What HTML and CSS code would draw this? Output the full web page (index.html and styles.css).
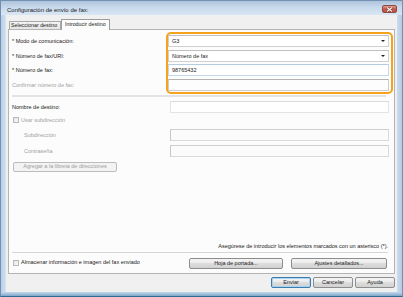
FILE: index.html
```html
<!DOCTYPE html>
<html lang="es">
<head>
<meta charset="utf-8">
<title>Configuración de envío de fax</title>
<link rel="stylesheet" href="styles.css">
</head>
<body>
<div class="window">
  <div class="titlebar">
    <span class="title">Configuración de envío de fax:</span>
    <span class="close"><svg width="7" height="5" viewBox="0 0 7 5"><path d="M1 0.5 L6 4.5 M6 0.5 L1 4.5" stroke="#5a2a24" stroke-width="2.2"/><path d="M1 0.5 L6 4.5 M6 0.5 L1 4.5" stroke="#ffffff" stroke-width="1.2"/></svg></span>
  </div>
  <div class="body">
    <div class="frame-l"></div>
    <div class="client">
      <div class="tabs">
        <div class="tab">Seleccionar destino</div>
        <div class="tab active">Introducir destino</div>
      </div>
      <div class="panel">
        <div class="top">
          <div class="labels">
            <div class="lbl">* Modo de comunicación:</div>
            <div class="lbl">* Número de fax/URI:</div>
            <div class="lbl">* Número de fax:</div>
            <div class="lbl dis">Confirmar número de fax:</div>
          </div>
          <div class="highlight">
            <div class="field combo"><span>G3</span><i class="arrow"></i></div>
            <div class="field combo"><span>Número de fax</span><i class="arrow"></i></div>
            <div class="field focus"><span>98765432</span></div>
            <div class="field confirm"></div>
          </div>
        </div>
        <div class="sep"></div>
        <div class="row first">
          <span class="lbl">Nombre de destino:</span>
          <div class="field light"></div>
        </div>
        <div class="check-row">
          <span class="check"></span><span class="lbl dis">Usar subdirección</span>
        </div>
        <div class="row sub">
          <span class="lbl dis">Subdirección</span>
          <div class="field disabled"></div>
        </div>
        <div class="row sub second">
          <span class="lbl dis">Contraseña</span>
          <div class="field disabled"></div>
        </div>
        <div class="btn dis-btn add">Agregar a la libreta de direcciones</div>
        <div class="bottom">
          <p class="note">Asegúrese de introducir los elementos marcados con un asterisco (*).</p>
          <div class="sep thin"></div>
          <div class="opt-row">
            <span class="check"></span><span class="lbl grow">Almacenar información e imagen del fax enviado</span>
            <div class="btn cover">Hoja de portada...</div>
            <div class="btn details">Ajustes detallados...</div>
          </div>
        </div>
      </div>
      <div class="actions">
        <div class="btn act default">Enviar</div>
        <div class="btn act">Cancelar</div>
        <div class="btn act">Ayuda</div>
      </div>
    </div>
    <div class="frame-r"></div>
  </div>
  <div class="frame-b"></div>
</div>
</body>
</html>
```
FILE: styles.css
```css
* { box-sizing: border-box; }
html, body { margin: 0; padding: 0; }
body {
  width: 403px;
  height: 297px;
  overflow: hidden;
  font-family: "Liberation Sans", Arial, sans-serif;
  font-size: 5.5px;
  color: #1a1a1a;
  background: #ffffff;
}
.window {
  width: 403px;
  height: 297px;
  display: flex;
  flex-direction: column;
  border: 1px solid #7390b3;
  border-bottom-color: #2f6a93;
  background: #c5d8ec;
}
.titlebar {
  height: 14px;
  display: flex;
  align-items: flex-start;
  background: linear-gradient(#aec4dc, #c8d9ec 45%, #d9e6f4);
}
.title {
  margin: 5px 0 0 6px;
  font-size: 6px;
  line-height: 8px;
  color: #1d1d1d;
  flex: 1;
}
.close {
  width: 15px;
  height: 8px;
  margin: 4px 5px 0 0;
  border: 1px solid #8c4b42;
  border-radius: 2px;
  background: linear-gradient(#e29a8e, #c95a4b 50%, #c0513f);
  display: flex;
  align-items: center;
  justify-content: center;
}
.close svg { display: block; }
.body {
  flex: 1;
  display: flex;
}
.frame-l { width: 4px; background: linear-gradient(90deg, #bcd0e6, #cbdcee); }
.frame-r { width: 5px; background: linear-gradient(90deg, #cbdcee, #b6cbe2); }
.frame-b { height: 4px; background: linear-gradient(#c7d9ec, #7ea6c8); }
.client {
  width: 392px;
  background: #f0f0f0;
  border-left: 1px solid #d7e2ee;
  padding: 4px 2px 4px 2px;
  display: flex;
  flex-direction: column;
}
.tabs {
  height: 10px;
  display: flex;
  align-items: flex-end;
  padding-left: 1px;
}
.tab {
  position: relative;
  height: 8px;
  width: 52px;
  border: 1px solid #a8a8a8;
  border-bottom: none;
  border-radius: 1px 1px 0 0;
  background: linear-gradient(#f5f5f5, #e4e4e4);
  font-size: 5.3px;
  line-height: 7px;
  padding-left: 1px;
  white-space: nowrap;
}
.tab.active {
  width: 49px;
  height: 11px;
  margin-bottom: -1px;
  background: #fcfcfc;
  border-color: #9c9c9c;
  padding-left: 3px;
  line-height: 9px;
  z-index: 1;
}
.panel {
  height: 245px;
  width: 387px;
  border: 1px solid #b4b4b4;
  background: #fcfcfc;
  padding: 0 1px 4px 3px;
  display: flex;
  flex-direction: column;
}
.top {
  display: flex;
  margin-top: 2px;
}
.labels {
  flex: 1;
  padding-top: 3px;
  display: flex;
  flex-direction: column;
  gap: 2.67px;
}
.lbl {
  line-height: 12px;
  height: 12px;
  white-space: nowrap;
}
.dis { color: #a2a2a2; }
.highlight {
  width: 227px;
  border: 2px solid #f6a31c;
  border-radius: 5px;
  padding: 1px 2px 1px 0;
  display: flex;
  flex-direction: column;
  gap: 2.67px;
}
.field {
  height: 12px;
  border: 1px solid #c9c9c9;
  border-top-color: #b5b5b5;
  background: #ffffff;
  display: flex;
  align-items: center;
  padding-left: 3px;
  line-height: 10px;
}
.field span { flex: 1; }
.combo { border-color: #d0d0d0; border-top-color: #c0c0c0; }
.arrow {
  width: 0;
  height: 0;
  border-left: 2px solid transparent;
  border-right: 2px solid transparent;
  border-top: 2px solid #222;
  margin-right: 3px;
}
.focus { border-color: #c4d8ec; border-top-color: #b4cbe3; }
.confirm { border-color: #cdcdcd; border-top-color: #b3b3b3; background: #fdfdfd; }
.sep {
  height: 2px;
  margin: 1px 7px 0 0;
  background: #e3e3e3;
}
.sep.thin {
  height: 1px;
  margin: 2px 5px 0 0;
  background: #d4d4d4;
  box-shadow: 0 1px 0 #ffffff;
}
.row {
  display: flex;
  align-items: center;
  height: 12px;
  margin-top: 4px;
}
.row .lbl { width: 158px; }
.row .field { width: 219px; }
.row.sub { margin-top: 5px; }
.row.sub .lbl { padding-left: 12px; }
.row.second { margin-top: 4px; }
.light { border-color: #e4e4e4; border-top-color: #dadada; }
.disabled { border-color: #dadada; border-top-color: #cfcfcf; border-left-color: #c8c8c8; background: #fbfbfb; }
.check-row {
  display: flex;
  align-items: center;
  height: 8px;
  margin-top: 3px;
  padding-left: 1px;
}
.check {
  width: 6px;
  height: 6px;
  border: 1px solid #b9b9b9;
  background: linear-gradient(135deg, #e6e6e6, #f8f8f8);
  margin-right: 2px;
  flex: none;
}
.btn {
  height: 11px;
  border: 1px solid #8d8d8d;
  border-radius: 2px;
  background: linear-gradient(#f4f4f4, #ebebeb 45%, #dddddd 50%, #d1d1d1);
  display: flex;
  align-items: center;
  justify-content: center;
  line-height: 9px;
  white-space: nowrap;
}
.dis-btn {
  border-color: #bcbcbc;
  background: #f3f3f3;
  color: #9d9d9d;
}
.add {
  width: 104px;
  height: 10px;
  margin: 5px 0 0 1px;
}
.bottom {
  margin-top: auto;
  display: flex;
  flex-direction: column;
}
.note {
  margin: 0;
  text-align: right;
  line-height: 7px;
  padding-right: 5px;
}
.opt-row {
  display: flex;
  align-items: center;
  margin-top: 4px;
  padding-left: 1px;
  padding-right: 6px;
}
.opt-row .grow { flex: 1; line-height: 11px; }
.cover { width: 94px; }
.details { width: 96px; margin-left: 8px; }
.actions {
  display: flex;
  justify-content: flex-end;
  gap: 2px;
  margin-top: 3px;
  padding-right: 0;
}
.act { width: 40px; }
.default { border-color: #3d7bad; box-shadow: inset 0 0 0 1px #a7d4f2; }
```
